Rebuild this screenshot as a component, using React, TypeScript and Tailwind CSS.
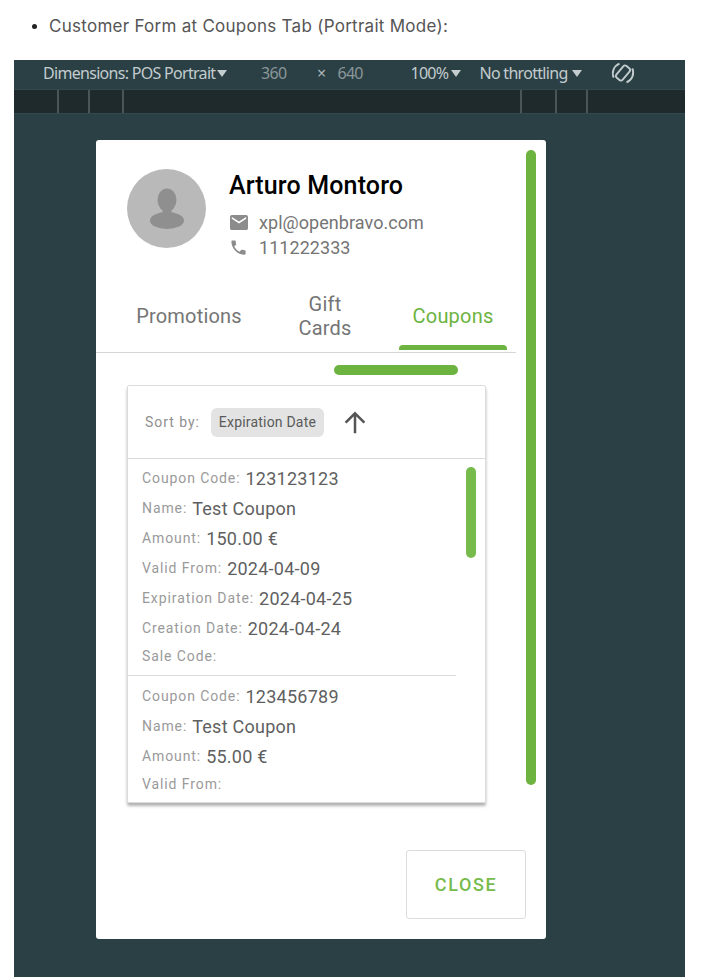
import React from "react";

function Row({ label, value }: { label: string; value?: string }) {
  return (
    <div className={`flex items-center gap-[5px] whitespace-nowrap ${value ? "h-[30px]" : "h-[26px]"}`}>
      <span className="text-[14px] tracking-[0.9px] text-[#9a9a9a]">{label}</span>
      {value && <span className="text-[18px] tracking-[0.25px] text-[#5f5f5f]">{value}</span>}
    </div>
  );
}

function Caret() {
  return (
    <svg width="10" height="7" viewBox="0 0 10 7" fill="#c3ccce">
      <path d="M0 0h10L5 7z" />
    </svg>
  );
}

const ticks = [43, 74, 108, 506, 541, 572];

export default function App() {
  return (
    <div className="h-[980px] w-[713px] overflow-hidden bg-white font-['Inter',sans-serif]">
      <div className="flex h-[60px] items-start pl-[32px] pt-[16px]">
        <span className="mt-[8px] h-[5px] w-[5px] rounded-full bg-[#222]" />
        <span className="ml-[12px] text-[17px] leading-[20px] tracking-[0.27px] text-[#555]">
          Customer Form at Coupons Tab (Portrait Mode):
        </span>
      </div>

      <div className="ml-[14px] h-[917px] w-[671px] bg-[#2a4044] font-['Roboto',sans-serif]">
        <div className="flex h-[29px] items-center whitespace-nowrap pb-[3px] text-[16px] tracking-[-0.7px] text-[#c3ccce] [font-family:'Noto_Sans',sans-serif]">
          <span className="ml-[29px] w-[174px]">Dimensions: POS Portrait</span>
          <Caret />
          <span className="ml-[34px] w-[24px] text-[#8a9699]">360</span>
          <span className="ml-[32px] text-[#aab4b6]">×</span>
          <span className="ml-[12px] w-[26px] text-[#8a9699]">640</span>
          <span className="ml-[47px] w-[38px]">100%</span>
          <span className="ml-[3px]"><Caret /></span>
          <span className="ml-[18px] w-[90px]">No throttling</span>
          <span className="ml-[3px]"><Caret /></span>
          <svg className="ml-[27px]" width="28" height="28" viewBox="0 0 24 24" fill="none" stroke="#c3ccce" strokeWidth="1.600">
            <path d="M4 16 A9 9 0 0 1 9 4" />
            <path d="M20 8 A9 9 0 0 1 15 20" />
            <rect x="8.500" y="5.500" width="7" height="13" rx="2" transform="rotate(40 12 12)" />
          </svg>
        </div>

        <div className="relative h-[25px] border-y border-[#34494e] bg-[#1f2a2c]">
          {ticks.map((x) => (
            <span key={x} className="absolute top-0 h-full w-[2px] bg-[#4a5557]" style={{ left: x }} />
          ))}
        </div>

        <div className="relative ml-[82px] mt-[26px] h-[799px] w-[450px] rounded-[3px] bg-white">
          <div className="absolute left-[430px] top-[10px] h-[635px] w-[10px] rounded-full bg-[#6db33f]" />

          <div className="flex pl-[31px] pt-[29px]">
            <div className="flex h-[79px] w-[79px] items-center justify-center rounded-full bg-[#b9b9b9]">
              <svg width="36" height="41" viewBox="0 0 36 41" fill="#8f8f8f">
                <ellipse cx="18" cy="12" rx="9.500" ry="11.500" />
                <ellipse cx="18" cy="32.500" rx="17" ry="8.500" />
                <rect x="13.500" y="20" width="9" height="8" />
              </svg>
            </div>
            <div className="ml-[23px]">
              <div className="pt-[1px] text-[25px] font-medium leading-[32px] tracking-[0.15px] text-black">Arturo Montoro</div>
              <div className="mt-[8px] flex h-[25px] items-center text-[18px] tracking-[0.05px] text-[#757575]">
                <span className="mr-[11px] flex w-[19px] justify-center">
                  <svg width="18" height="15" viewBox="2 4 20 16" fill="#8c8c8c" preserveAspectRatio="none">
                    <path d="M20 4H4c-1.100 0-2 .9-2 2v12c0 1.100.9 2 2 2h16c1.100 0 2-.9 2-2V6c0-1.100-.9-2-2-2zm0 4l-8 5-8-5V6l8 5 8-5v2z" />
                  </svg>
                </span>
                xpl@openbravo.com
              </div>
              <div className="flex h-[25px] items-center text-[18px] tracking-[0.05px] text-[#757575]">
                <svg className="mr-[11px]" width="19" height="19" viewBox="0 0 24 24" fill="#8c8c8c">
                  <path d="M6.620 10.790c1.440 2.830 3.760 5.140 6.590 6.590l2.200-2.200c.27-.27.67-.36 1.020-.24 1.120.37 2.330.57 3.570.57.550 0 1 .45 1 1V20c0 .55-.45 1-1 1-9.390 0-17-7.610-17-17 0-.55.45-1 1-1h3.500c.55 0 1 .45 1 1 0 1.250.2 2.450.57 3.570.11.350.03.740-.25 1.020l-2.200 2.200z" />
                </svg>
                111222333
              </div>
            </div>
          </div>

          <div className="relative mt-[29px] flex h-[64px] w-[420px] items-center border-b border-[#d6d6d6] pb-[10px] text-center text-[20px] leading-[24px] tracking-[0.2px] text-[#757575]">
            <div className="ml-[40px] w-[106px]">Promotions</div>
            <div className="ml-[53px] w-[60px]">Gift<br />Cards</div>
            <div className="ml-[56px] w-[84px] text-[#6db33f]">Coupons</div>
            <div className="absolute bottom-[2px] left-[303px] h-[5px] w-[108px] rounded-t-[4px] bg-[#6db33f]" />
          </div>

          <div className="ml-[238px] mt-[12px] h-[10px] w-[124px] rounded-full bg-[#6db33f]" />

          <div className="ml-[31px] mt-[10px] h-[418px] w-[359px] overflow-hidden rounded-[2px] border border-[#dcdcdc] shadow-[0_3px_3px_rgba(0,0,0,0.3)]">
            <div className="flex h-[73px] items-center border-b border-[#dcdcdc] pl-[17px]">
              <span className="text-[14px] tracking-[0.95px] text-[#8f8f8f]">Sort by:</span>
              <span className="ml-[11px] flex h-[29px] items-center rounded-[6px] bg-[#e3e3e3] px-[8px] text-[14px] tracking-[0.2px] text-[#5a5a5a]">Expiration Date</span>
              <svg className="ml-[16px]" width="30" height="30" viewBox="0 0 24 24" fill="none" stroke="#555" strokeWidth="2">
                <path d="M12 21V5M4.500 12.500 12 5l7.500 7.500" />
              </svg>
            </div>
            <div className="relative">
              <div className="absolute left-[338px] top-[8px] h-[91px] w-[10px] rounded-full bg-[#76bb4b]" />
              <div className="w-[328px] border-b border-[#dcdcdc] pb-[6px] pl-[14px] pt-[4px]">
                <Row label="Coupon Code:" value="123123123" />
                <Row label="Name:" value="Test Coupon" />
                <Row label="Amount:" value="150.00 €" />
                <Row label="Valid From:" value="2024-04-09" />
                <Row label="Expiration Date:" value="2024-04-25" />
                <Row label="Creation Date:" value="2024-04-24" />
                <Row label="Sale Code:" />
              </div>
              <div className="pl-[14px] pt-[5px]">
                <Row label="Coupon Code:" value="123456789" />
                <Row label="Name:" value="Test Coupon" />
                <Row label="Amount:" value="55.00 €" />
                <Row label="Valid From:" />
              </div>
            </div>
          </div>

          <div className="ml-[310px] mt-[47px] flex h-[69px] w-[120px] items-center justify-center rounded-[3px] border border-[#dcdcdc] text-[18px] font-medium tracking-[1.6px] text-[#77bb4c]">
            CLOSE
          </div>
        </div>
      </div>
    </div>
  );
}
